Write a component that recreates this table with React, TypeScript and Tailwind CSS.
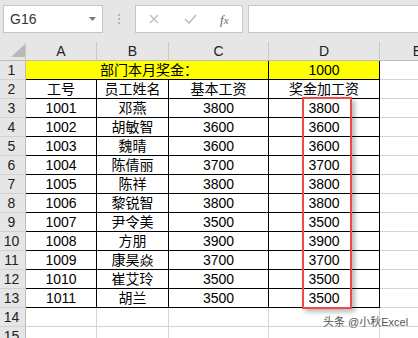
import React from "react";

const FONT = { fontFamily: '"Liberation Sans", "Noto Sans CJK SC", sans-serif' };

const rows: [string, string, string, string][] = [
  ["1001", "邓燕", "3800", "3800"],
  ["1002", "胡敏智", "3600", "3600"],
  ["1003", "魏晴", "3600", "3600"],
  ["1004", "陈倩丽", "3700", "3700"],
  ["1005", "陈祥", "3800", "3800"],
  ["1006", "黎锐智", "3800", "3800"],
  ["1007", "尹令美", "3500", "3500"],
  ["1008", "方朋", "3900", "3900"],
  ["1009", "康昊焱", "3700", "3700"],
  ["1010", "崔艾玲", "3500", "3500"],
  ["1011", "胡兰", "3500", "3500"],
];

const GRID = "grid grid-cols-[26px_71px_72px_100px_111px_76px] h-[19px]";

function RowHead({ n }: { n: number }) {
  return (
    <div className="h-[19px] bg-[#e6e6e6] border-r border-b border-r-[#bcbcbc] border-b-[#d2d2d2] flex items-center justify-center text-[14px] leading-[19px] text-[#222] pr-[2px]">
      {n}
    </div>
  );
}

function Cell({ children, black, className = "" }: { children?: React.ReactNode; black?: boolean; className?: string }) {
  return (
    <div
      className={
        "h-[19px] border-r border-b flex items-center justify-center text-[14px] leading-[19px] text-black whitespace-nowrap " +
        (black ? "border-black " : "border-[#d4d4d4] ") +
        className
      }
    >
      {children}
    </div>
  );
}

export default function App() {
  return (
    <div className="w-[418px] h-[338px] overflow-hidden bg-white relative" style={FONT}>
      {/* toolbar */}
      <div className="h-[42px] bg-[#e6e6e6] flex items-start pt-[5px]">
        <div className="ml-[3px] w-[100px] h-[28px] bg-white border border-[#c6c6c6] flex items-center pl-[6px] pr-[6px]">
          <span className="text-[14px] text-[#333] flex-1">G16</span>
          <svg width="7" height="4" viewBox="0 0 7 4">
            <path d="M0 0 L7 0 L3.5 4 Z" fill="#7a7a7a" />
          </svg>
        </div>
        <div className="w-[32px] h-[28px] flex flex-col items-center justify-center gap-[2px]">
          <span className="w-[2px] h-[2px] bg-[#b4b4b4]" />
          <span className="w-[2px] h-[2px] bg-[#b4b4b4]" />
          <span className="w-[2px] h-[2px] bg-[#b4b4b4]" />
        </div>
        <div className="w-[108px] h-[28px] bg-white border border-[#c6c6c6] flex items-center">
          <svg width="10" height="10" viewBox="0 0 10 10" className="ml-[13px]">
            <path d="M1 1 L9 9 M9 1 L1 9" stroke="#bdbdbd" strokeWidth="1.4" />
          </svg>
          <svg width="13" height="10" viewBox="0 0 13 10" className="ml-[25px]">
            <path d="M1 5 L5 9 L12 1" stroke="#bdbdbd" strokeWidth="1.6" fill="none" />
          </svg>
          <span className="ml-[23px] text-[13px] italic text-[#666] leading-none" style={{ fontFamily: '"Liberation Serif", serif' }}>
            f<span className="text-[11px]">x</span>
          </span>
        </div>
        <div className="ml-[5px] flex-1 h-[28px] bg-white border border-[#c6c6c6] border-r-0" />
      </div>

      {/* sheet */}
      <div className="relative">
        {/* column headers */}
        <div className="grid grid-cols-[26px_71px_72px_100px_111px_76px] h-[19px] bg-[#e6e6e6]">
          <div className="border-r border-b border-r-[#c8c8c8] border-b-[#bcbcbc] relative">
            <svg width="14" height="13" viewBox="0 0 14 13" className="absolute left-[11px] top-[2px]">
              <path d="M14 0 L14 13 L0 13 Z" fill="#b9b9b9" />
            </svg>
          </div>
          {["A", "B", "C", "D", "E"].map((c) => (
            <div key={c} className="border-r border-b border-r-[#c8c8c8] border-b-[#bcbcbc] flex items-end justify-center text-[14px] leading-[17px] text-[#222]">
              {c}
            </div>
          ))}
        </div>

        {/* row 1 */}
        <div className={GRID}>
          <RowHead n={1} />
          <Cell black className="col-span-3 bg-[#ffff00] pl-[4px]">部门本月奖金：</Cell>
          <Cell black className="bg-[#ffff00]">1000</Cell>
          <Cell />
        </div>
        {/* row 2 */}
        <div className={GRID}>
          <RowHead n={2} />
          <Cell black>工号</Cell>
          <Cell black>员工姓名</Cell>
          <Cell black>基本工资</Cell>
          <Cell black>奖金加工资</Cell>
          <Cell />
        </div>
        {rows.map((r, i) => (
          <div key={r[0]} className={GRID}>
            <RowHead n={i + 3} />
            <Cell black>{r[0]}</Cell>
            <Cell black>{r[1]}</Cell>
            <Cell black>{r[2]}</Cell>
            <Cell black>{r[3]}</Cell>
            <Cell />
          </div>
        ))}
        {[14, 15].map((n) => (
          <div key={n} className={GRID}>
            <RowHead n={n} />
            <Cell />
            <Cell />
            <Cell />
            <Cell />
            <Cell />
          </div>
        ))}

        {/* red highlight rectangle */}
        <div className="absolute left-[302px] top-[55px] w-[50px] h-[212px] border-2 border-[#ee4a4c] shadow-[3px_3px_5px_rgba(0,0,0,0.28)]" />
      </div>

      {/* watermark */}
      <div
        className="absolute left-[323px] top-[314px] text-[11px] leading-[16px] text-[#555] whitespace-nowrap"
        style={{ textShadow: "0 0 2px #fff, 0 0 2px #fff" }}
      >
        头条 @小秋Excel
      </div>
    </div>
  );
}
